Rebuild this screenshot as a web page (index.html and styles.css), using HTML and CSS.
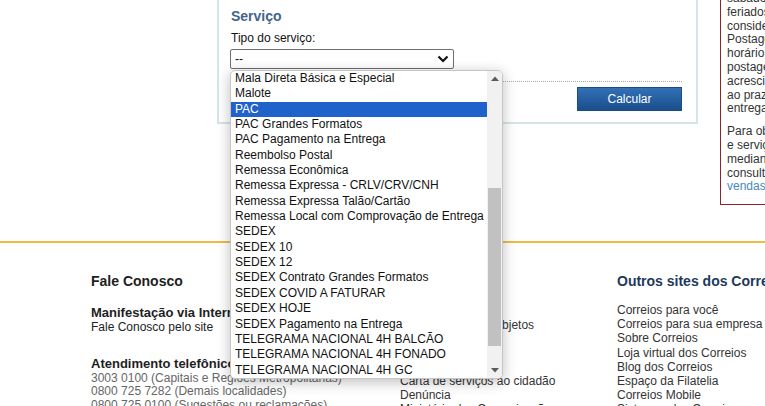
FILE: index.html
```html
<!DOCTYPE html>
<html lang="pt-BR">
<head>
<meta charset="utf-8">
<title>Cálculo de preços e prazos</title>
<link rel="stylesheet" href="styles.css">
</head>
<body>
<div class="top-row">
  <section class="panel">
    <h3 class="panel-title">Serviço</h3>
    <div class="field-label">Tipo do serviço:</div>
    <div class="select">
      <span>--</span>
      <svg class="chevron" width="12" height="8" viewBox="0 0 12 8"><path d="M1.5 1.5 L6 6 L10.5 1.5" fill="none" stroke="#111" stroke-width="2.2"/></svg>
    </div>
    <div class="dotted"></div>
    <div class="actions"><button class="btn-calc">Calcular</button></div>
  </section>
  <aside class="notice">
    <p>sábados, domingos e</p>
    <p>feriados não são</p>
    <p>considerados.</p>
    <p>Postagens após o</p>
    <p>horário limite de</p>
    <p>postagem terão</p>
    <p>acrescido 1 dia útil</p>
    <p>ao prazo de</p>
    <p>entrega.</p>
    <p class="gap">Para obter preços</p>
    <p>e serviços</p>
    <p>mediante contrato,</p>
    <p>consulte a área de</p>
    <p><a class="link">vendas</a>.</p>
  </aside>
</div>

<footer class="footer">
  <div class="col col-left">
    <h4 class="col-title">Fale Conosco</h4>
    <h5 class="sub-title first">Manifestação via Internet</h5>
    <div class="line">Fale Conosco pelo site</div>
    <h5 class="sub-title second">Atendimento telefônico</h5>
    <div class="phones">
      <div>3003 0100 (Capitais e Regiões Metropolitanas)</div>
      <div>0800 725 7282 (Demais localidades)</div>
      <div>0800 725 0100 (Sugestões ou reclamações)</div>
    </div>
  </div>
  <div class="col col-mid">
    <h4 class="col-title">Institucional</h4>
    <ul class="links mid">
      <li>Busca CEP</li>
      <li>Rastreamento de objetos</li>
      <li>Preços e prazos</li>
      <li>Ouvidoria</li>
      <li>Acessibilidade</li>
      <li>Carta de serviços ao cidadão</li>
      <li>Denúncia</li>
      <li>Ministério das Comunicações</li>
    </ul>
  </div>
  <div class="col col-right">
    <h4 class="col-title navy">Outros sites dos Correios</h4>
    <ul class="links right">
      <li>Correios para você</li>
      <li>Correios para sua empresa</li>
      <li>Sobre Correios</li>
      <li>Loja virtual dos Correios</li>
      <li>Blog dos Correios</li>
      <li>Espaço da Filatelia</li>
      <li>Correios Mobile</li>
      <li>Sistemas dos Correios</li>
    </ul>
  </div>
</footer>

<!-- open list of the service select -->
<div class="dropdown">
  <ul class="options">
    <li>Mala Direta Básica e Especial</li>
    <li>Malote</li>
    <li class="selected">PAC</li>
    <li>PAC Grandes Formatos</li>
    <li>PAC Pagamento na Entrega</li>
    <li>Reembolso Postal</li>
    <li>Remessa Econômica</li>
    <li>Remessa Expressa - CRLV/CRV/CNH</li>
    <li>Remessa Expressa Talão/Cartão</li>
    <li>Remessa Local com Comprovação de Entrega</li>
    <li>SEDEX</li>
    <li>SEDEX 10</li>
    <li>SEDEX 12</li>
    <li>SEDEX Contrato Grandes Formatos</li>
    <li>SEDEX COVID A FATURAR</li>
    <li>SEDEX HOJE</li>
    <li>SEDEX Pagamento na Entrega</li>
    <li>TELEGRAMA NACIONAL 4H BALCÃO</li>
    <li>TELEGRAMA NACIONAL 4H FONADO</li>
    <li>TELEGRAMA NACIONAL 4H GC</li>
  </ul>
  <div class="scrollbar">
    <div class="sb-btn"><svg width="8" height="5" viewBox="0 0 8 5"><path d="M0 5 L4 0.5 L8 5 Z" fill="#5a5a5a"/></svg></div>
    <div class="sb-track"><div class="sb-thumb"></div></div>
    <div class="sb-btn"><svg width="8" height="5" viewBox="0 0 8 5"><path d="M0 0 L4 4.5 L8 0 Z" fill="#5a5a5a"/></svg></div>
  </div>
</div>
</body>
</html>
```

FILE: styles.css
```css
html, body {
  margin: 0;
  padding: 0;
  overflow: hidden;
  background: #fff;
}

body {
  font-family: "Liberation Sans", Arial, sans-serif;
  font-size: 12px;
  color: #222;
  position: relative;
  width: 765px;
  height: 406px;
}

/* ---------- upper area: form panel + notice box ---------- */
.top-row {
  display: flex;
  align-items: flex-start;
  padding-left: 217px;
}

.panel {
  box-sizing: border-box;
  width: 481px;
  flex: none;
  border: 2px solid #d4e5e8;
  border-top: 0;
  padding: 8px 14px 11px 12px;
}

.panel-title {
  margin: 0;
  font-size: 14px;
  line-height: 17px;
  font-weight: bold;
  color: #43648a;
}

.field-label {
  margin-top: 6px;
  line-height: 14px;
  color: #111;
}

.select {
  box-sizing: border-box;
  margin-top: 4px;
  margin-left: -1px;
  width: 224px;
  height: 20px;
  border: 1px solid #6f6f6f;
  border-radius: 2px;
  display: flex;
  align-items: center;
  justify-content: space-between;
  padding: 0 4px 0 4px;
  color: #111;
}

.chevron { display: block; }

.dotted {
  margin-top: 12px;
  border-top: 1px dotted #aaa;
}

.actions {
  display: flex;
  justify-content: flex-end;
  margin-top: 5px;
}

.btn-calc {
  box-sizing: border-box;
  width: 105px;
  height: 24px;
  border: 1px solid #1b4c84;
  background: linear-gradient(#3271b5, #1a4e8c);
  color: #fff;
  font-family: "Liberation Sans", Arial, sans-serif;
  font-size: 12px;
  padding: 0;
}

.notice {
  flex: none;
  box-sizing: border-box;
  width: 200px;
  margin-left: 22px;
  margin-top: -8px;
  border: 1px solid #8b2626;
  border-top: 0;
  padding: 0 0 10px 6px;
  color: #333;
  white-space: nowrap;
}

.notice p {
  margin: 0;
  line-height: 13.8px;
}

.notice p.gap { margin-top: 9px; }

.link { color: #4a86bf; }

/* ---------- footer ---------- */
.footer {
  margin-top: 36px;
  border-top: 2px solid #efbb45;
  display: flex;
  padding: 30px 0 0 91px;
}

.col { flex: none; }
.col-left { width: 309px; }
.col-mid { width: 217px; }
.col-right { width: 200px; white-space: nowrap; }

.col-title {
  margin: 0;
  font-size: 14px;
  line-height: 17px;
  font-weight: bold;
  color: #1e1e1e;
}

.col-title.navy { color: #1d3a5c; }

.sub-title {
  margin: 0;
  font-size: 13px;
  line-height: 15px;
  font-weight: bold;
  color: #1e1e1e;
}

.sub-title.first { margin-top: 14.5px; }
.sub-title.second { margin-top: 22px; }

.line {
  line-height: 14px;
  color: #222;
}

.phones {
  margin-top: 1.5px;
  color: #666;
  line-height: 13.3px;
  white-space: nowrap;
}

.links {
  list-style: none;
  margin: 0;
  padding: 0;
  color: #333;
}

.links.mid { margin-top: 14px; line-height: 14px; }
.links.right { margin-top: 12.9px; line-height: 14.2px; }

/* ---------- open option list ---------- */
.dropdown {
  position: absolute;
  left: 230px;
  top: 70px;
  width: 273px;
  height: 309px;
  box-sizing: border-box;
  border: 1px solid #c6c6c6;
  border-radius: 5px;
  background: #fff;
  box-shadow: 0 3px 14px rgba(0, 0, 0, 0.26);
  display: flex;
  overflow: hidden;
}

.options {
  list-style: none;
  margin: 0;
  padding: 0;
  flex: 1;
}

.options li {
  height: 15.35px;
  line-height: 15.35px;
  padding-left: 4px;
  color: #111;
  white-space: nowrap;
}

.options li.selected {
  background: #1f62c9;
  color: #fff;
}

.scrollbar {
  width: 15px;
  flex: none;
  display: flex;
  flex-direction: column;
  background: #f1f1f1;
}

.sb-btn {
  height: 15px;
  display: flex;
  align-items: center;
  justify-content: center;
}

.sb-track {
  flex: 1;
}

.sb-thumb {
  margin: 102px 1px 0 1px;
  height: 158px;
  background: #c1c1c1;
}
```
